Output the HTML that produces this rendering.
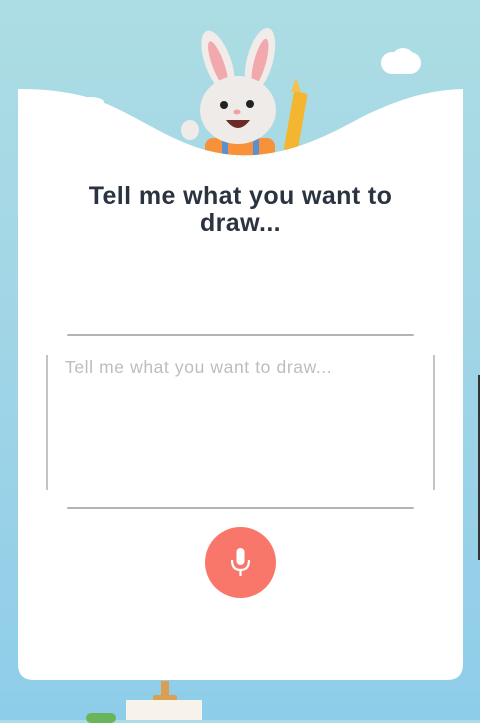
<!DOCTYPE html>
<html><head><meta charset="utf-8"><style>
html,body{margin:0;padding:0}
body{width:480px;height:720px;overflow:hidden;position:relative;background:linear-gradient(#acdde4 0%,#a3d6e6 40%,#8ecde9 100%);font-family:"Liberation Sans",sans-serif}
.abs{position:absolute}
h1{position:absolute;left:18px;width:445px;top:183px;margin:0;text-align:center;font-size:25px;line-height:27px;font-weight:bold;color:#2b3340;letter-spacing:0.4px}
.line{position:absolute;left:67px;width:347px;height:2px;background:#b4b4b4;border-radius:1px}
.vl{position:absolute;top:355px;height:135px;width:2px;background:#c4c4c4}
.ph{position:absolute;left:65px;top:357px;font-size:17.5px;color:#bdbdbd;letter-spacing:0.6px}
.mic{position:absolute;left:205px;top:527px;width:71px;height:71px;border-radius:50%;background:#f9776a}
</style></head><body>
<div class="abs" style="left:381px;top:52px;width:40px;height:22px;background:#fff;border-radius:14px"></div>
<div class="abs" style="left:392px;top:48px;width:22px;height:20px;background:#fff;border-radius:50%"></div>
<svg class="abs" style="left:0;top:0" width="480" height="170">
 <ellipse cx="218" cy="62" rx="13" ry="33" fill="#f1ecea" transform="rotate(-20 218 62)"/>
 <ellipse cx="218" cy="64" rx="6" ry="24" fill="#f2a9ad" transform="rotate(-20 218 64)"/>
 <ellipse cx="260" cy="60" rx="13" ry="33" fill="#f1ecea" transform="rotate(15 260 60)"/>
 <ellipse cx="260" cy="62" rx="6" ry="24" fill="#f2a9ad" transform="rotate(15 260 62)"/>
 <rect x="205" y="138" width="70" height="22" rx="8" fill="#f7923a"/>
 <rect x="222" y="138" width="6" height="22" fill="#5a8fd0"/>
 <rect x="253" y="138" width="6" height="22" fill="#5a8fd0"/>
 <ellipse cx="238" cy="110" rx="38" ry="34" fill="#efebe8"/>
 <ellipse cx="190" cy="130" rx="9" ry="10" fill="#efebe8"/>
 <circle cx="224" cy="105" r="4" fill="#222"/><circle cx="250" cy="104" r="4" fill="#222"/>
 <ellipse cx="237" cy="112" rx="3.5" ry="2.5" fill="#f2a0a6"/>
 <path d="M226 120 Q238 136 250 120 Z" fill="#6a2a25"/>
 <polygon points="291,92 301,92 296,78" fill="#f6c04a"/>
 <rect x="289" y="92" width="14" height="60" rx="3" fill="#f4b630" transform="rotate(10 296 120)"/>
</svg>
<svg class="abs" style="left:0;top:0" width="480" height="720">
 <path d="M18 89 C60 89 90 95 120 110 C160 130 190 152 235 155 C280 158 320 140 360 118 C400 98 430 90 463 89 L463 664 Q463 680 447 680 L34 680 Q18 680 18 664 Z" fill="#fff"/>
 <ellipse cx="90" cy="102" rx="14" ry="5" fill="#fff"/>
</svg>
<h1>Tell me what you want to<br>draw...</h1>
<div class="line" style="top:334px"></div>
<div class="vl" style="left:46px"></div>
<div class="vl" style="left:433px"></div>
<div class="ph">Tell me what you want to draw...</div>
<div class="line" style="top:507px"></div>
<div class="mic"><svg width="71" height="71" viewBox="0 0 71 71">
 <rect x="31.5" y="21" width="8" height="17" rx="4" fill="#fff"/>
 <path d="M27 33 Q27 43 35.5 43 Q44 43 44 33" fill="none" stroke="#fff" stroke-width="2.2"/>
 <line x1="35.5" y1="43" x2="35.5" y2="49" stroke="#fff" stroke-width="2.2"/>
</svg></div>
<div class="abs" style="left:478px;top:375px;width:2px;height:185px;background:#333"></div>
<div class="abs" style="left:161px;top:681px;width:8px;height:18px;background:#d9a055"></div>
<div class="abs" style="left:153px;top:695px;width:24px;height:8px;background:#d9a055;border-radius:2px"></div>
<div class="abs" style="left:126px;top:700px;width:76px;height:20px;background:#f7f3ea"></div>
<div class="abs" style="left:86px;top:713px;width:30px;height:10px;background:#6ab55a;border-radius:6px"></div>
</body></html>
